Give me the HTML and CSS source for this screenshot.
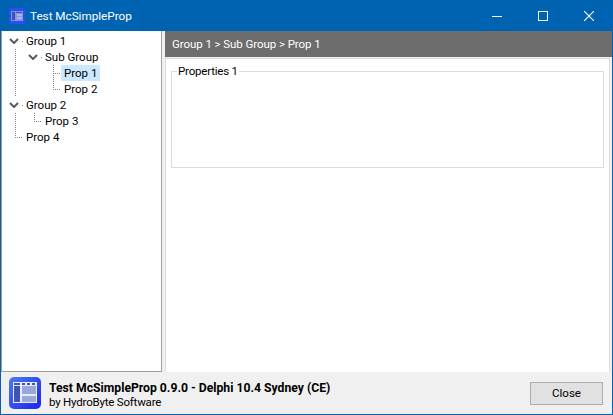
FILE: index.html
```html
<!DOCTYPE html>
<html lang="en">
<head>
  <title>Test McSimpleProp</title>
  <meta charset="utf-8" />
  <link rel="stylesheet" href="styles.css">
</head>
<body>
  <div class="window">
    <div class="titlebar">
      <svg class="app-icon-small" width="16" height="16" viewBox="0 0 16 16">
        <rect width="16" height="16" rx="2" fill="#2b4df2"/>
        <rect x="2" y="3" width="12" height="10" fill="#8496dc"/>
        <rect x="3" y="4" width="3" height="8" fill="#3b50b4"/>
        <rect x="7" y="4" width="6" height="1" fill="#3b50b4"/>
        <rect x="8" y="6" width="5" height="2" fill="#a9b6e6"/>
        <rect x="8" y="9" width="5" height="2" fill="#a9b6e6"/>
      </svg>
      <span class="title">Test McSimpleProp</span>
      <div class="caption-buttons">
        <span class="caption-btn">
          <svg width="10" height="10" viewBox="0 0 10 10"><rect y="5" width="10" height="1" fill="#fff"/></svg>
        </span>
        <span class="caption-btn">
          <svg width="10" height="10" viewBox="0 0 10 10"><rect x="0.5" y="0.5" width="9" height="9" fill="none" stroke="#fff"/></svg>
        </span>
        <span class="caption-btn">
          <svg width="10" height="10" viewBox="0 0 10 10"><path d="M0 0L10 10M10 0L0 10" stroke="#fff" stroke-width="1.1"/></svg>
        </span>
      </div>
    </div>

    <div class="main">
      <div class="tree">
        <div class="row">
          <span class="cell chev"><svg width="10" height="6" viewBox="0 0 10 6"><path d="M1 1L5 5L9 1" fill="none" stroke="#595959" stroke-width="2"/></svg></span>
          <span class="label">Group 1</span>
        </div>
        <div class="row">
          <span class="cell vline"></span>
          <span class="cell chev"><svg width="10" height="6" viewBox="0 0 10 6"><path d="M1 1L5 5L9 1" fill="none" stroke="#595959" stroke-width="2"/></svg></span>
          <span class="label">Sub Group</span>
        </div>
        <div class="row">
          <span class="cell vline"></span>
          <span class="cell"></span>
          <span class="cell tee"></span>
          <span class="label selected">Prop 1</span>
        </div>
        <div class="row">
          <span class="cell vline"></span>
          <span class="cell"></span>
          <span class="cell elbow"></span>
          <span class="label">Prop 2</span>
        </div>
        <div class="row">
          <span class="cell chev"><svg width="10" height="6" viewBox="0 0 10 6"><path d="M1 1L5 5L9 1" fill="none" stroke="#595959" stroke-width="2"/></svg></span>
          <span class="label">Group 2</span>
        </div>
        <div class="row">
          <span class="cell vline"></span>
          <span class="cell elbow"></span>
          <span class="label">Prop 3</span>
        </div>
        <div class="row">
          <span class="cell elbow"></span>
          <span class="label">Prop 4</span>
        </div>
      </div>

      <div class="content">
        <div class="crumb">Group 1 &gt; Sub Group &gt; Prop 1</div>
        <div class="page">
          <fieldset class="group">
            <legend>Properties 1</legend>
          </fieldset>
        </div>
      </div>
    </div>

    <div class="footer">
      <svg class="app-icon" width="32" height="32" viewBox="0 0 32 32">
        <defs>
          <linearGradient id="iconbg" x1="0" y1="0" x2="1" y2="1">
            <stop offset="0" stop-color="#4a7cf0"/>
            <stop offset="1" stop-color="#1a22f0"/>
          </linearGradient>
        </defs>
        <rect width="32" height="32" rx="5" fill="url(#iconbg)"/>
        <rect x="4" y="5" width="24" height="21" fill="#e8ecf8"/>
        <rect x="5" y="9" width="6" height="16" fill="#3c55b0"/>
        <rect x="13" y="9" width="14" height="8" fill="#98a8dc"/>
        <rect x="13" y="19" width="14" height="6" fill="#98a8dc"/>
        <rect x="5" y="6" width="6" height="2" fill="#3c55b0"/>
        <rect x="13" y="6" width="3" height="2" fill="#3c55b0"/>
        <rect x="18" y="6" width="3" height="2" fill="#3c55b0"/>
        <rect x="23" y="6" width="3" height="2" fill="#3c55b0"/>
      </svg>
      <div class="about">
        <div class="about-name">Test McSimpleProp 0.9.0 - Delphi 10.4 Sydney (CE)</div>
        <div class="about-by">by HydroByte Software</div>
      </div>
      <button class="close">Close</button>
    </div>
  </div>
</body>
</html>
```

FILE: styles.css
```css
* {
  margin: 0;
  padding: 0;
  box-sizing: border-box;
}

html, body {
  width: 613px;
  height: 415px;
  overflow: hidden;
}

body {
  font-family: Roboto, "Open Sans", sans-serif;
  font-size: 11.5px;
  color: #000;
}

.window {
  width: 613px;
  height: 415px;
  display: flex;
  flex-direction: column;
  background: #f0f0f0;
  border: 1px solid #0063b1;
  border-top: 0;
}

/* title bar */
.titlebar {
  height: 31px;
  flex: none;
  display: flex;
  align-items: center;
  padding-left: 8px;
  background: #0063b1;
  color: #fff;
}

.app-icon-small {
  flex: none;
}

.title {
  margin-left: 5px;
  font-size: 11.7px;
}

.caption-buttons {
  margin-left: auto;
  display: flex;
}

.caption-btn {
  width: 46px;
  height: 31px;
  display: flex;
  align-items: center;
  justify-content: center;
}

/* tree + content */
.main {
  flex: 1;
  min-height: 0;
  display: flex;
}

.tree {
  width: 161px;
  flex: none;
  padding: 2px 0 0 2px;
  background: #fff;
  border-left: 1px solid #a0a0a0;
  border-right: 1px solid #a0a0a0;
  border-bottom: 1px solid #a0a0a0;
}

.row {
  height: 16px;
  display: flex;
}

.cell {
  width: 19px;
  height: 16px;
  flex: none;
  position: relative;
}

.label {
  padding: 0 3px;
  line-height: 16px;
  white-space: nowrap;
}

.selected {
  background: #cce8ff;
}

.chev {
  display: flex;
  align-items: center;
  padding-left: 5px;
}

.chev::after {
  content: "";
  position: absolute;
  right: 0;
  top: 8px;
  width: 1px;
  height: 1px;
  background: #808080;
}

.vline::before,
.tee::before,
.elbow::before {
  content: "";
  position: absolute;
  left: 11px;
  top: 0;
  width: 1px;
  background: repeating-linear-gradient(to bottom, #808080 0, #808080 1px, transparent 1px, transparent 2px);
}

.vline::before,
.tee::before {
  height: 16px;
}

.elbow::before {
  height: 9px;
}

.tee::after,
.elbow::after {
  content: "";
  position: absolute;
  left: 11px;
  top: 8px;
  width: 8px;
  height: 1px;
  background: repeating-linear-gradient(to right, #808080 0, #808080 1px, transparent 1px, transparent 2px);
}

.content {
  flex: 1;
  min-width: 0;
  margin-left: 3px;
  display: flex;
  flex-direction: column;
}

.crumb {
  height: 26px;
  flex: none;
  padding-left: 7px;
  line-height: 26px;
  background: #6d6d6d;
  color: #fff;
  letter-spacing: -0.07px;
}

.page {
  flex: 1;
  margin: 1px 2px 0 0;
  padding: 0 5px;
  background: #fff;
  border: 1px solid #dcdcdc;
  border-bottom: 0;
}

.group {
  height: 104px;
  margin-top: 5px;
  padding-left: 5px;
  border: 1px solid #dcdcdc;
}

.group legend {
  padding: 0 1px;
  line-height: 14px;
  letter-spacing: -0.2px;
}

/* footer */
.footer {
  height: 42px;
  flex: none;
  display: flex;
  align-items: center;
  padding: 0 9px 0 8px;
}

.about {
  margin-left: 8px;
  padding-top: 4px;
  line-height: 14px;
}

.about-name {
  font-size: 12.2px;
  font-weight: bold;
}

.about-by {
  letter-spacing: -0.2px;
}

.close {
  margin-left: auto;
  width: 73px;
  height: 23px;
  font-family: inherit;
  font-size: 11.5px;
  background: #e1e1e1;
  border: 1px solid #adadad;
}
```
